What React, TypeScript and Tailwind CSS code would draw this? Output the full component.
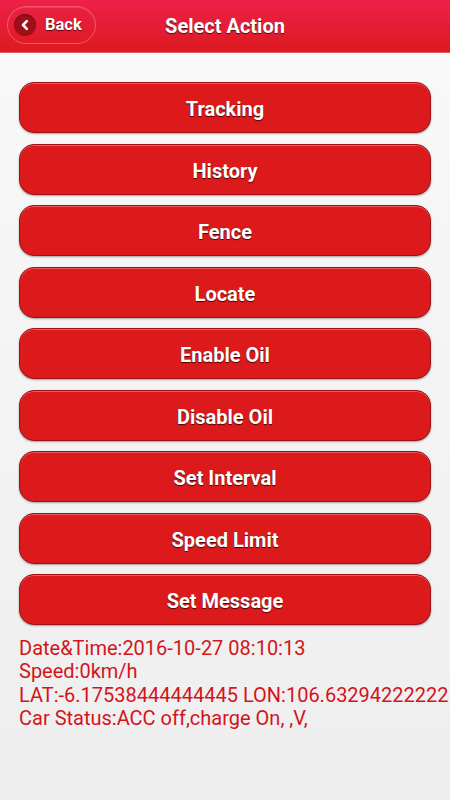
import React from "react";

const actions = [
  "Tracking",
  "History",
  "Fence",
  "Locate",
  "Enable Oil",
  "Disable Oil",
  "Set Interval",
  "Speed Limit",
  "Set Message",
];

export default function App() {
  return (
    <div
      className="w-[450px] h-[800px] overflow-hidden flex flex-col bg-gradient-to-b from-[#f9f9f9] to-[#eeeeee]"
      style={{ fontFamily: "Roboto, 'Liberation Sans', sans-serif" }}
    >
      <div className="relative h-[53px] shrink-0 bg-gradient-to-b from-[#ee2048] to-[#db1a1e] border-b border-[#e9546c] flex items-center justify-center">
        <div className="absolute left-[7px] top-[6px] w-[89px] h-[38px] rounded-full border border-[#f2566a] bg-gradient-to-b from-[#eb1f44] to-[#de1b24] shadow-[inset_0_1px_0_rgba(255,255,255,0.15)] flex items-center pl-[6px] gap-[9px]">
          <div className="w-[22px] h-[22px] rounded-full bg-[#a00f17] flex items-center justify-center shadow-[inset_0_1px_2px_rgba(0,0,0,0.3)]">
            <svg width="12" height="12" viewBox="0 0 12 12">
              <path d="M7.8 2.2 L4 6 L7.8 9.8" fill="none" stroke="white" strokeWidth="2.6" strokeLinecap="round" strokeLinejoin="round" />
            </svg>
          </div>
          <span className="text-white font-bold text-[16.5px] [text-shadow:0_1px_1px_rgba(60,0,0,0.8)]">Back</span>
        </div>
        <span className="text-white font-bold text-[20px] [text-shadow:0_1px_1px_rgba(60,0,0,0.8)]">Select Action</span>
      </div>
      <div className="flex flex-col gap-[10.5px] px-[19px] pt-[29px]">
        {actions.map((a) => (
          <button
            key={a}
            className="h-[51px] w-full rounded-[15px] border border-[#9e1014] bg-[#dc1a1c] shadow-[inset_0_1px_0_#f05a5c,0_1px_2px_rgba(0,0,0,0.35)] flex items-center justify-center pt-[3px] text-white font-bold text-[20px] [text-shadow:0_1px_1px_rgba(50,0,0,0.85)]"
          >
            {a}
          </button>
        ))}
      </div>
      <div className="pl-[19px] pt-[12px] text-[#d4141b] text-[20px] leading-[23.3px] whitespace-nowrap overflow-hidden">
        <div>Date&amp;Time:2016-10-27 08:10:13</div>
        <div>Speed:0km/h</div>
        <div>LAT:-6.17538444444445 LON:106.63294222222</div>
        <div>Car Status:ACC off,charge On, ,V,</div>
      </div>
    </div>
  );
}
